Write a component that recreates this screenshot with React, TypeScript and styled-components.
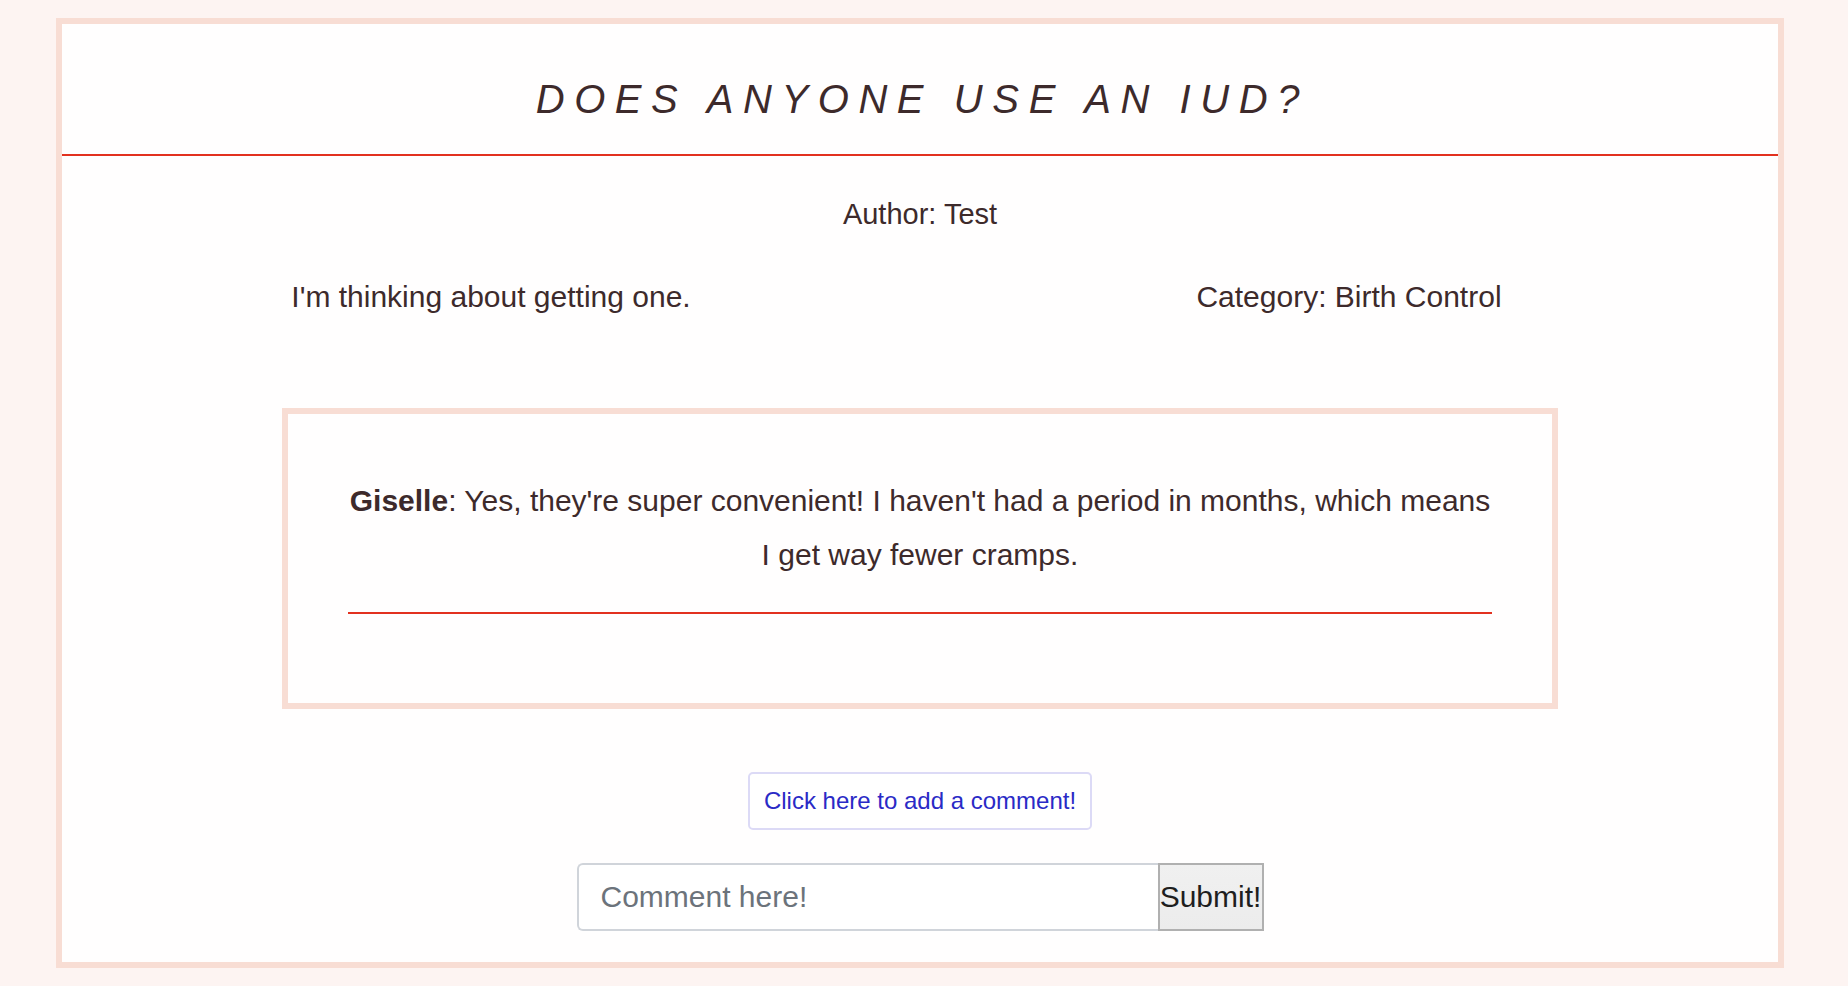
import React from "react";
import styled, { createGlobalStyle } from "styled-components";

const GlobalStyle = createGlobalStyle`
  html, body {
    margin: 0;
    padding: 0;
    background: #fdf4f2;
  }
  body {
    font-family: "Liberation Sans", Arial, Helvetica, sans-serif;
    color: #3d2a2b;
  }
  * { box-sizing: border-box; }
`;

const Page = styled.div`
  padding: 18px 0 18px 56px;
`;

const Card = styled.main`
  width: 1728px;
  background: #fffefe;
  border: 6px solid #f8ddd4;
  padding-bottom: 31px;
  display: flex;
  flex-direction: column;
  align-items: stretch;
`;

const Header = styled.header`
  padding: 52px 0 32px;
  border-bottom: 2px solid #e2311f;
`;

const Title = styled.h1`
  margin: 0;
  font-size: 40px;
  line-height: 46px;
  font-weight: 400;
  font-style: italic;
  letter-spacing: 0.24em;
  text-transform: uppercase;
  text-align: center;
  padding-left: 0.12em;
`;

const Author = styled.p`
  margin: 42px 0 0;
  font-size: 29px;
  line-height: 32px;
  text-align: center;
`;

const InfoRow = styled.div`
  margin-top: 50px;
  display: grid;
  grid-template-columns: 1fr 1fr;
`;

const InfoCell = styled.p`
  margin: 0;
  font-size: 30px;
  line-height: 34.5px;
  text-align: center;
`;

const CommentBox = styled.section`
  align-self: center;
  width: 1276px;
  margin-top: 93px;
  border: 6px solid #f8ddd4;
  padding: 60px 60px 60px;
`;

const CommentText = styled.p`
  margin: 0 0 30px;
  font-size: 30px;
  line-height: 54px;
  text-align: center;
`;

const Commenter = styled.strong`
  font-weight: 700;
`;

const Divider = styled.hr`
  margin: 0 0 29px;
  border: none;
  height: 2px;
  background: #e2311f;
`;

const AddButton = styled.button`
  align-self: center;
  margin-top: 63px;
  padding: 13px 14px;
  background: #ffffff;
  border: 2px solid #dcdaf6;
  border-radius: 5px;
  color: #2a2ac6;
  font-family: "Liberation Sans", Arial, Helvetica, sans-serif;
  font-size: 24px;
  line-height: 28px;
  cursor: pointer;
`;

const CommentForm = styled.form`
  align-self: center;
  margin-top: 33px;
  display: flex;
  height: 68px;
`;

const CommentInput = styled.input`
  width: 581px;
  height: 68px;
  padding: 0 22px;
  border: 2px solid #d0d4da;
  border-right: none;
  border-radius: 6px 0 0 6px;
  font-family: "Liberation Sans", Arial, Helvetica, sans-serif;
  font-size: 30px;
  color: #3d2a2b;
  background: #ffffff;
  outline: none;
  &::placeholder {
    color: #6c737b;
  }
`;

const SubmitButton = styled.button`
  width: 106px;
  height: 68px;
  padding: 0;
  border: 2px solid #b0b0b0;
  background: linear-gradient(#f0f0f0, #ececec);
  color: #1e1e1e;
  font-family: "Liberation Sans", Arial, Helvetica, sans-serif;
  font-size: 30px;
  cursor: pointer;
`;

export default function App() {
  return (
    <>
      <GlobalStyle />
      <Page>
        <Card>
          <Header>
            <Title>Does anyone use an IUD?</Title>
          </Header>
          <Author>Author: Test</Author>
          <InfoRow>
            <InfoCell>I'm thinking about getting one.</InfoCell>
            <InfoCell>Category: Birth Control</InfoCell>
          </InfoRow>
          <CommentBox>
            <CommentText>
              <Commenter>Giselle</Commenter>: Yes, they're super convenient! I
              haven't had a period in months, which means I get way fewer
              cramps.
            </CommentText>
            <Divider />
          </CommentBox>
          <AddButton type="button">Click here to add a comment!</AddButton>
          <CommentForm onSubmit={(e) => e.preventDefault()}>
            <CommentInput type="text" placeholder="Comment here!" />
            <SubmitButton type="submit">Submit!</SubmitButton>
          </CommentForm>
        </Card>
      </Page>
    </>
  );
}
